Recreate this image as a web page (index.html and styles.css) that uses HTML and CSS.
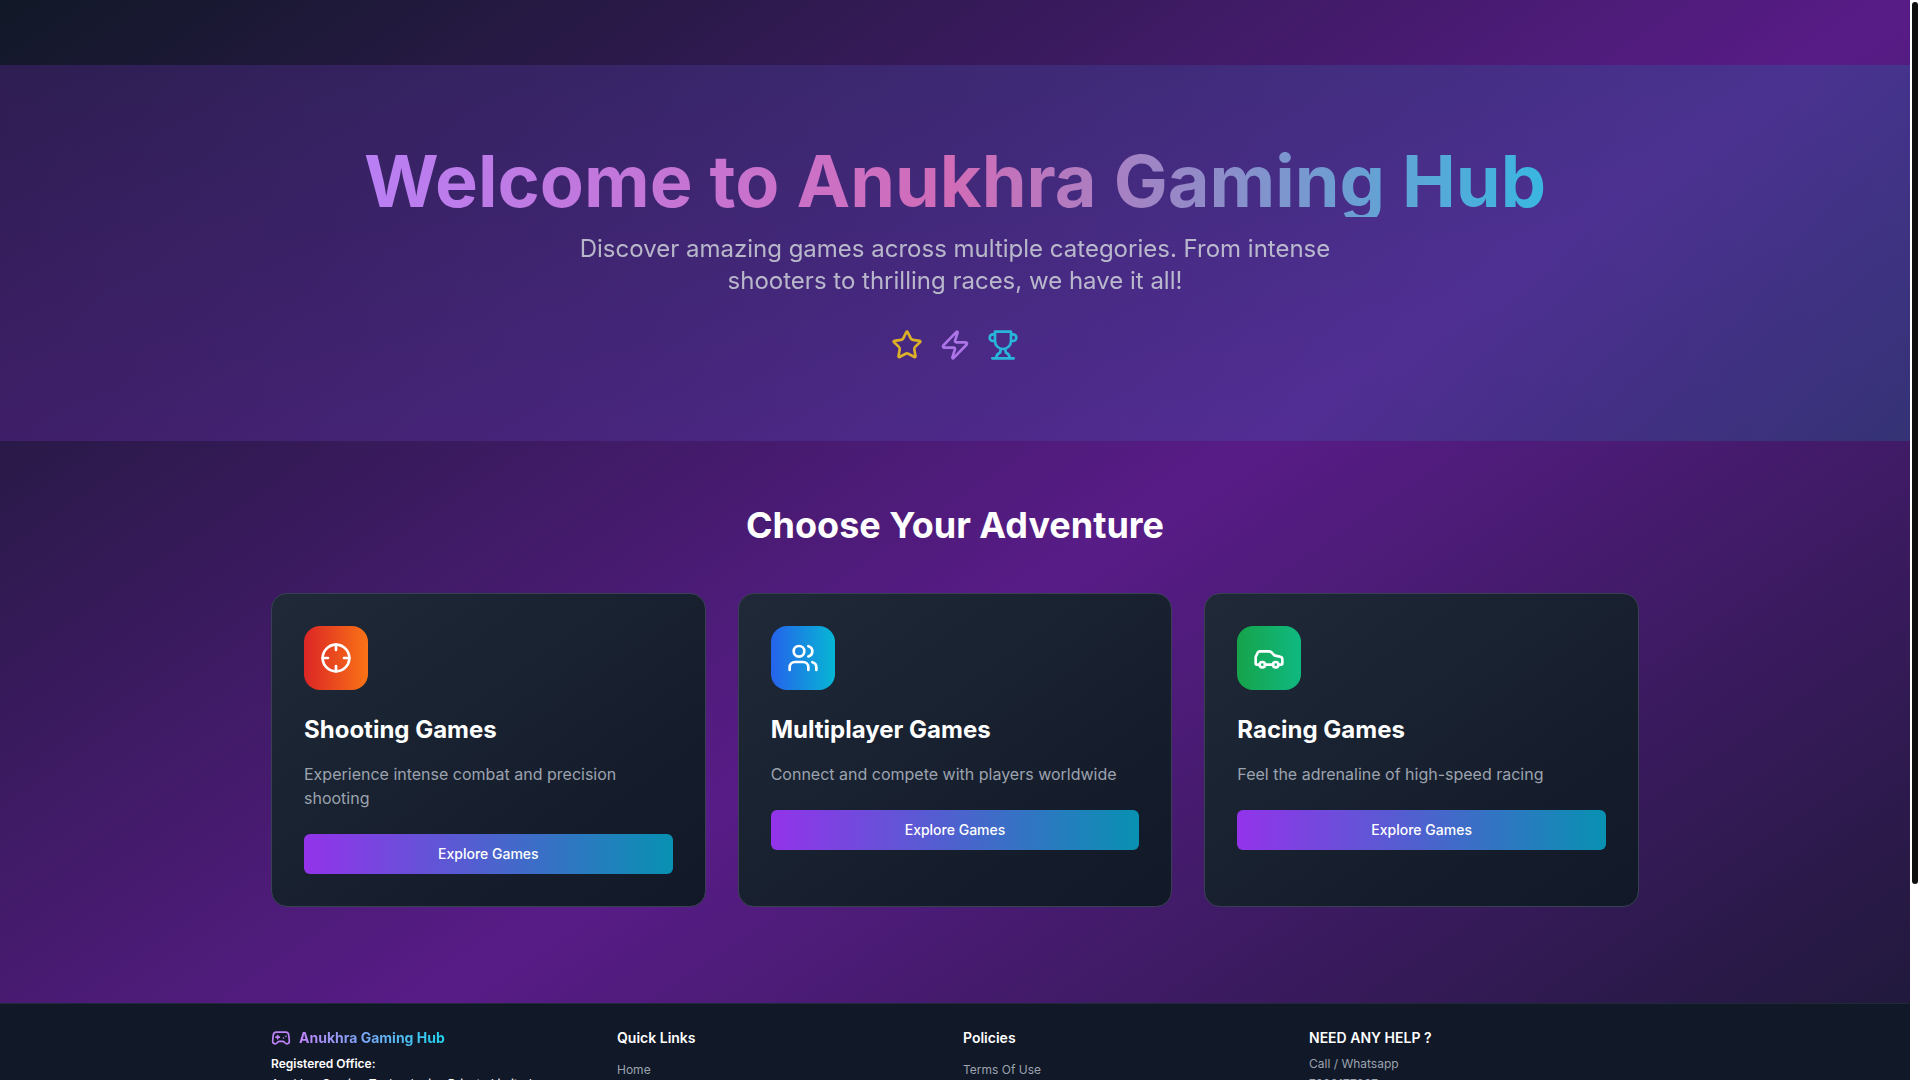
FILE: index.html
```html
<!DOCTYPE html>
<html lang="en">
<head>
<meta charset="utf-8">
<meta name="viewport" content="width=device-width, initial-scale=1">
<title>Anukhra Gaming Hub</title>
<link rel="stylesheet" href="styles.css">
</head>
<body>
<div class="page">
  <main>
    <section class="hero">
      <h1 class="hero-title">Welcome to Anukhra Gaming Hub</h1>
      <p class="hero-text">Discover amazing games across multiple categories. From intense shooters to thrilling races, we have it all!</p>
      <div class="hero-icons">
        <svg class="icon icon-star" viewBox="0 0 24 24" aria-hidden="true"><path d="M11.525 2.295a.53.53 0 0 1 .95 0l2.31 4.679a2.123 2.123 0 0 0 1.595 1.16l5.166.756a.53.53 0 0 1 .294.904l-3.736 3.638a2.123 2.123 0 0 0-.611 1.878l.882 5.14a.53.53 0 0 1-.771.56l-4.618-2.428a2.122 2.122 0 0 0-1.973 0L6.396 21.01a.53.53 0 0 1-.77-.56l.881-5.139a2.122 2.122 0 0 0-.611-1.879L2.16 9.795a.53.53 0 0 1 .294-.906l5.165-.755a2.122 2.122 0 0 0 1.597-1.16z"/></svg>
        <svg class="icon icon-zap" viewBox="0 0 24 24" aria-hidden="true"><path d="M4 14a1 1 0 0 1-.78-1.63l9.9-10.2a.5.5 0 0 1 .86.46l-1.92 6.02A1 1 0 0 0 13 10h7a1 1 0 0 1 .78 1.63l-9.9 10.2a.5.5 0 0 1-.86-.46l1.92-6.02A1 1 0 0 0 11 14z"/></svg>
        <svg class="icon icon-trophy" viewBox="0 0 24 24" aria-hidden="true"><path d="M6 9H4.500a2.500 2.500 0 0 1 0-5H6M18 9h1.500a2.500 2.500 0 0 0 0-5H18M4 22h16M10 14.660V17c0 .55-.47.98-.97 1.210C7.850 18.750 7 20.240 7 22M14 14.660V17c0 .55.47.98.97 1.210C16.150 18.750 17 20.240 17 22M18 2H6v7a6 6 0 0 0 12 0V2Z"/></svg>
      </div>
    </section>

    <section class="categories">
      <h2 class="categories-title">Choose Your Adventure</h2>
      <div class="card-grid">
        <article class="card">
          <div class="card-icon card-icon-red">
            <svg class="icon" viewBox="0 0 24 24" aria-hidden="true"><circle cx="12" cy="12" r="10"/><path d="M22 12h-4M6 12H2M12 6V2M12 22v-4"/></svg>
          </div>
          <h3 class="card-title">Shooting Games</h3>
          <p class="card-text">Experience intense combat and precision shooting</p>
          <button class="card-button" type="button">Explore Games</button>
        </article>
        <article class="card">
          <div class="card-icon card-icon-blue">
            <svg class="icon" viewBox="0 0 24 24" aria-hidden="true"><path d="M16 21v-2a4 4 0 0 0-4-4H6a4 4 0 0 0-4 4v2"/><circle cx="9" cy="7" r="4"/><path d="M22 21v-2a4 4 0 0 0-3-3.870M16 3.130a4 4 0 0 1 0 7.750"/></svg>
          </div>
          <h3 class="card-title">Multiplayer Games</h3>
          <p class="card-text">Connect and compete with players worldwide</p>
          <button class="card-button" type="button">Explore Games</button>
        </article>
        <article class="card">
          <div class="card-icon card-icon-green">
            <svg class="icon" viewBox="0 0 24 24" aria-hidden="true"><path d="M19 17h2c.6 0 1-.4 1-1v-3c0-.9-.7-1.700-1.500-1.900C18.700 10.600 16 10 16 10s-1.300-1.400-2.200-2.300c-.5-.4-1.100-.7-1.800-.7H5c-.6 0-1.100.4-1.400.9l-1.400 2.900A3.700 3.700 0 0 0 2 12v4c0 .6.4 1 1 1h2"/><circle cx="7" cy="17" r="2"/><path d="M9 17h6"/><circle cx="17" cy="17" r="2"/></svg>
          </div>
          <h3 class="card-title">Racing Games</h3>
          <p class="card-text">Feel the adrenaline of high-speed racing</p>
          <button class="card-button" type="button">Explore Games</button>
        </article>
      </div>
    </section>
  </main>

  <footer class="footer">
    <div class="footer-grid">
      <div>
        <div class="brand">
          <svg class="icon brand-icon" viewBox="0 0 24 24" aria-hidden="true"><path d="M6 11h4M8 9v4M15 12h.01M18 10h.01M17.320 5H6.680a4 4 0 0 0-3.978 3.590C2.604 9.416 2 14.456 2 16a3 3 0 0 0 3 3c1 0 1.500-.5 2-1l1.414-1.414A2 2 0 0 1 9.828 16h4.344a2 2 0 0 1 1.414.586L17 18c.5.5 1 1 2 1a3 3 0 0 0 3-3c0-1.545-.604-6.584-.685-7.258A4 4 0 0 0 17.320 5z"/></svg>
          <span class="brand-name">Anukhra Gaming Hub</span>
        </div>
        <p class="office"><strong class="office-label">Registered Office:</strong><br>Anukhra Gaming Technologies Private Limited</p>
      </div>
      <div>
        <h4 class="footer-title">Quick Links</h4>
        <ul class="footer-links">
          <li><a href="#home">Home</a></li>
        </ul>
      </div>
      <div>
        <h4 class="footer-title">Policies</h4>
        <ul class="footer-links">
          <li><a href="#terms">Terms Of Use</a></li>
        </ul>
      </div>
      <div>
        <h4 class="footer-title">NEED ANY HELP ?</h4>
        <p class="contact">Call / Whatsapp<br>7999177887</p>
      </div>
    </div>
  </footer>
</div>
<div class="scrollbar" aria-hidden="true"><div class="scrollbar-thumb"></div></div>
</body>
</html>
```
FILE: styles.css
```css
*,
*::before,
*::after {
  box-sizing: border-box;
}

html {
  background: #fff;
  scrollbar-width: none;
}

body {
  margin: 0;
  padding-right: 10px;
  color: #fff;
  font-family: Inter, "Noto Sans", sans-serif;
  font-size: 16px;
  line-height: 24px;
}

h1, h2, h3, h4, p, ul {
  margin: 0;
  padding: 0;
}

.page {
  padding-top: 65px;
  background: linear-gradient(to bottom right, #111827, #581c87, #111827);
}

/* Slim scrollbar pinned to the window edge */
.scrollbar {
  position: fixed;
  top: 0;
  right: 0;
  bottom: 0;
  width: 10px;
  padding: 2px;
  background: #fff;
}

.scrollbar-thumb {
  height: 82%;
  border-radius: 3px;
  background: #0f0f0f;
}

.icon {
  width: 32px;
  height: 32px;
  fill: none;
  stroke: currentColor;
  stroke-width: 2;
  stroke-linecap: round;
  stroke-linejoin: round;
}

.hero {
  padding: 80px 16px;
  background: linear-gradient(to right, rgba(147, 51, 234, 0.2), rgba(8, 145, 178, 0.2));
  text-align: center;
}

.hero-title {
  width: fit-content;
  margin: 0 auto 16px;
  background: linear-gradient(to right, #c084fc, #d970bb, #39bfe5);
  -webkit-background-clip: text;
  background-clip: text;
  color: transparent;
  font-size: 72px;
  line-height: 72px;
  opacity: 0.95;
}

.hero-text {
  max-width: 768px;
  margin: 0 auto 32px;
  color: #d1d5db;
  font-size: 24px;
  line-height: 32px;
  opacity: 0.83;
}

.hero-icons {
  display: flex;
  justify-content: center;
  gap: 16px;
  opacity: 0.83;
}

.icon-star { color: #facc15; }
.icon-zap { color: #c084fc; }
.icon-trophy { color: #22d3ee; }

.categories {
  max-width: 1400px;
  margin: 0 auto;
  padding: 64px 16px 96px;
}

.categories-title {
  margin-bottom: 48px;
  font-size: 36px;
  line-height: 40px;
  text-align: center;
}

.card-grid {
  display: grid;
  grid-template-columns: repeat(3, 1fr);
  gap: 32px;
}

.card {
  padding: 32px;
  border: 1px solid #374151;
  border-radius: 16px;
  background: linear-gradient(to bottom right, #1f2937, #111827);
}

.card-icon {
  display: flex;
  align-items: center;
  justify-content: center;
  width: 64px;
  height: 64px;
  margin-bottom: 24px;
  border-radius: 16px;
}

.card-icon-red { background: linear-gradient(to right, #dc2626, #f97316); }
.card-icon-blue { background: linear-gradient(to right, #2563eb, #06b6d4); }
.card-icon-green { background: linear-gradient(to right, #16a34a, #10b981); }

.card-title {
  margin-bottom: 16px;
  font-size: 24px;
  line-height: 32px;
}

.card-text {
  margin-bottom: 24px;
  color: #9ca3af;
}

.card-button {
  width: 100%;
  height: 40px;
  border: 0;
  border-radius: 6px;
  background: linear-gradient(to right, #9333ea, #0891b2);
  color: #fff;
  font: 500 14px/20px Inter, "Noto Sans", sans-serif;
  cursor: pointer;
}

.footer {
  padding: 24px 16px 200px;
  border-top: 1px solid #1f2937;
  background: #111827;
}

.footer-grid {
  display: grid;
  grid-template-columns: repeat(4, 1fr);
  gap: 16px;
  max-width: 1368px;
  margin: 0 auto;
}

.brand {
  display: flex;
  align-items: center;
  gap: 8px;
  height: 20px;
  margin-bottom: 6px;
  font-size: 14px;
  font-weight: 700;
}

.brand-icon {
  width: 20px;
  height: 20px;
  color: #c084fc;
}

.brand-name {
  background: linear-gradient(to right, #c084fc, #22d3ee);
  -webkit-background-clip: text;
  background-clip: text;
  color: transparent;
}

.office,
.contact,
.footer-links {
  font-size: 12px;
  line-height: 20px;
}

.office-label {
  font-weight: 600;
}

.contact {
  color: #9ca3af;
}

.footer-title {
  margin-bottom: 6px;
  font-size: 14px;
  font-weight: 600;
  line-height: 20px;
}

.footer-links {
  padding-top: 6px;
  list-style: none;
}

.footer-links a {
  color: #9ca3af;
  text-decoration: none;
}
```
